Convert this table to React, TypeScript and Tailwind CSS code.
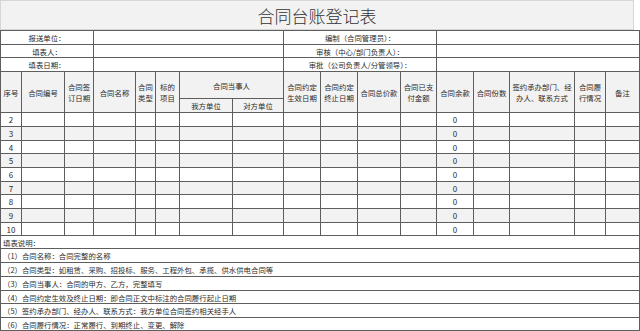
import React from 'react'

type HeadCell = {
  text: React.ReactNode
  span?: string
}

const font = { fontFamily: '"Noto Sans CJK SC", "Noto Sans", sans-serif' }

const head: HeadCell[] = [
  { text: '序号', span: 'row-span-2' },
  { text: '合同编号', span: 'row-span-2' },
  { text: <>合同签<br />订日期</>, span: 'row-span-2' },
  { text: '合同名称', span: 'row-span-2' },
  { text: <>合同<br />类型</>, span: 'row-span-2' },
  { text: <>标的<br />项目</>, span: 'row-span-2' },
  { text: '合同当事人', span: 'col-span-2' },
  { text: <>合同约定<br />生效日期</>, span: 'row-span-2' },
  { text: <>合同约定<br />终止日期</>, span: 'row-span-2' },
  { text: '合同总价款', span: 'row-span-2' },
  { text: <>合同已支<br />付金额</>, span: 'row-span-2' },
  { text: '合同余款', span: 'row-span-2' },
  { text: '合同份数', span: 'row-span-2' },
  { text: <>签约承办部门、经<br />办人、联系方式</>, span: 'row-span-2' },
  { text: <>合同履<br />行情况</>, span: 'row-span-2' },
  { text: '备注', span: 'row-span-2' },
  { text: '我方单位' },
  { text: '对方单位' },
]

const notes = [
  '填表说明：',
  '（1）合同名称：合同完整的名称',
  '（2）合同类型：如租赁、采购、招投标、服务、工程外包、承揽、供水供电合同等',
  '（3）合同当事人：合同的甲方、乙方，完整填写',
  '（4）合同约定生效及终止日期：即合同正文中标注的合同履行起止日期',
  '（5）签约承办部门、经办人、联系方式：我方单位合同签约相关经手人',
  '（6）合同履行情况：正常履行、到期终止、变更、解除',
]

const rows = [2, 3, 4, 5, 6, 7, 8, 9, 10]

function App() {
  return (
    <div className="w-[640px] h-[331px] bg-white text-[#2b2b2b]" style={font}>
      <div className="w-[634px] h-[30px] bg-[#f2f2f2] border border-[#d6d6d6] flex items-center justify-center text-[17px] font-light text-[#333] leading-none">
        合同台账登记表
      </div>
      <div className="grid w-[640px] gap-px p-px bg-[#5e5e5e] text-[7.4px] leading-[11px] grid-cols-[20px_42px_28px_41px_19px_23px_52px_50px_36px_36px_42px_35px_36px_35px_64px_30px_33px] grid-rows-[13px_12px_13px_26px_13px_13px_13px_12px_13px_13px_12px_13px_13px_12px_12px_13px_13px_13px_12px_13px_12px]">
        <div className="col-span-3 bg-white flex items-center justify-center">报送单位：</div>
        <div className="col-span-5 bg-white" />
        <div className="col-span-4 bg-white flex items-center justify-center">编制（合同管理员）：</div>
        <div className="col-span-5 bg-white" />
        <div className="col-span-3 bg-white flex items-center justify-center">填表人：</div>
        <div className="col-span-5 bg-white" />
        <div className="col-span-4 bg-white flex items-center justify-center">审核（中心/部门负责人）：</div>
        <div className="col-span-5 bg-white" />
        <div className="col-span-3 bg-white flex items-center justify-center">填表日期：</div>
        <div className="col-span-5 bg-white" />
        <div className="col-span-4 bg-white flex items-center justify-center whitespace-nowrap">审批（公司负责人/分管领导）：</div>
        <div className="col-span-5 bg-white" />

        {head.map((h, i) => (
          <div
            key={i}
            className={`${h.span ?? ''} bg-[#f2f2f2] flex items-center justify-center text-center whitespace-nowrap`}
          >
            {h.text}
          </div>
        ))}

        {rows.map((n) => {
          const bg = n % 2 === 1 ? 'bg-[#f2f2f2]' : 'bg-white'
          return Array.from({ length: 17 }).map((_, c) => (
            <div key={`${n}-${c}`} className={`${bg} flex items-center justify-center text-[8px]`}>
              {c === 0 ? n : c === 12 ? '0' : ''}
            </div>
          ))
        })}

        {notes.map((t) => (
          <div key={t} className="col-span-full bg-white flex items-center pl-[2px] whitespace-nowrap">
            {t}
          </div>
        ))}
      </div>
    </div>
  )
}

export default App
